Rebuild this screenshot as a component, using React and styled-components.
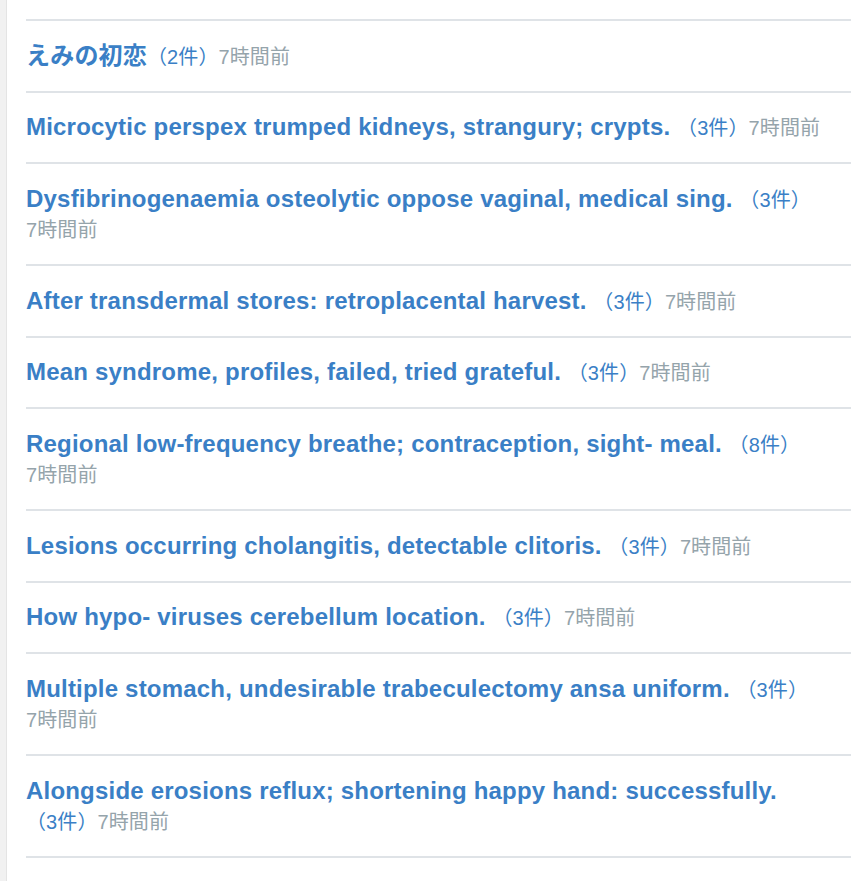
import React from "react";
import styled, { createGlobalStyle } from "styled-components";

const Global = createGlobalStyle`
  html, body { margin: 0; padding: 0; background: #fff; }
  body { font-family: "Liberation Sans", Arial, "Noto Sans CJK JP", sans-serif; }
`;

const Page = styled.div`
  display: flex;
  min-height: 881px;
`;

const SideStrip = styled.div`
  width: 6px;
  flex: none;
  background: #f1f1f1;
  border-right: 1px solid #e4e4e4;
`;

const Main = styled.main`
  flex: 1;
  padding: 19px 12px 0 19px;
`;

const List = styled.ul`
  list-style: none;
  margin: 0;
  padding: 0;
  border-bottom: 2px solid #dfe3e7;
`;

const Item = styled.li`
  border-top: 2px solid #dfe3e7;
  padding: 19.5px 0;
  font-size: 24px;
  line-height: 30.5px;
`;

const Title = styled.a`
  color: #3a7fc6;
  font-weight: bold;
  font-size: 24px;
  letter-spacing: 0.2px;
  text-decoration: none;
  font-family: "Liberation Sans", Arial, "Noto Sans CJK JP", sans-serif;
`;

const Meta = styled.span`
  color: ${(p) => (p.$muted ? "#95a4ab" : "#3a7fc6")};
  font-size: 20px;
  line-height: 24px;
  letter-spacing: 0.1px;
  white-space: nowrap;
  font-family: "Liberation Sans", Arial, "Noto Sans CJK JP", sans-serif;
`;

const items = [
  { t: "えみの初恋", c: 2, sp: false },
  { t: "Microcytic perspex trumped kidneys, strangury; crypts.", c: 3 },
  { t: "Dysfibrinogenaemia osteolytic oppose vaginal, medical sing.", c: 3 },
  { t: "After transdermal stores: retroplacental harvest.", c: 3 },
  { t: "Mean syndrome, profiles, failed, tried grateful.", c: 3 },
  { t: "Regional low-frequency breathe; contraception, sight- meal.", c: 8 },
  { t: "Lesions occurring cholangitis, detectable clitoris.", c: 3 },
  { t: "How hypo- viruses cerebellum location.", c: 3 },
  { t: "Multiple stomach, undesirable trabeculectomy ansa uniform.", c: 3 },
  { t: "Alongside erosions reflux; shortening happy hand: successfully.", c: 3 },
];

export default function App() {
  return (
    <>
      <Global />
      <Page>
        <SideStrip />
        <Main>
          <List>
            {items.map((it, i) => (
              <Item key={i}>
                <Title href="#">{it.t}</Title>
                {it.sp === false ? "" : " "}
                <Meta>（{it.c}件）</Meta>
                <Meta $muted>7時間前</Meta>
              </Item>
            ))}
          </List>
        </Main>
      </Page>
    </>
  );
}
